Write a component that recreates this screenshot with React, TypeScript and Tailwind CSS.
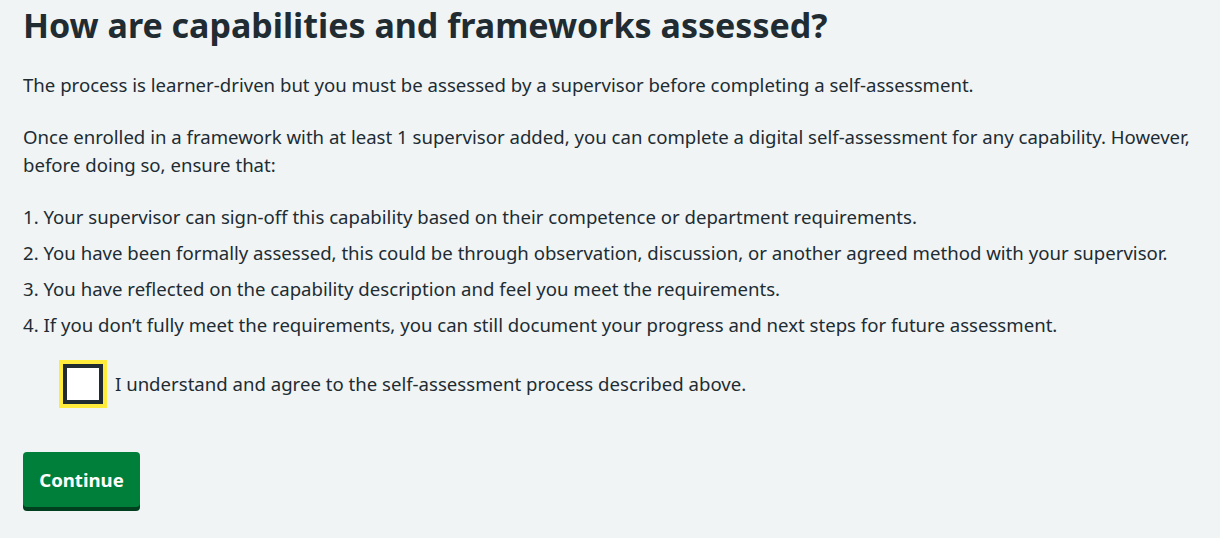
import React, { useState } from "react";

const items = [
  "Your supervisor can sign-off this capability based on their competence or department requirements.",
  "You have been formally assessed, this could be through observation, discussion, or another agreed method with your supervisor.",
  "You have reflected on the capability description and feel you meet the requirements.",
  "If you don’t fully meet the requirements, you can still document your progress and next steps for future assessment.",
];

export default function App() {
  const [agreed, setAgreed] = useState(false);

  return (
    <div
      className="min-h-[538px] bg-[#f0f4f5] text-[#212b32] pl-[23px] pr-[2px] pt-[4px]"
      style={{ fontFamily: '"Noto Sans", Arial, sans-serif' }}
    >
      <h1 className="text-[34px] leading-[42px] font-bold mb-[25px]">
        How are capabilities and frameworks assessed?
      </h1>
      <p className="text-[18.6px] leading-[28px] mb-6">
        The process is learner-driven but you must be assessed by a supervisor before completing a self-assessment.
      </p>
      <p className="text-[18.6px] leading-[28px] mb-6">
        Once enrolled in a framework with at least 1 supervisor added, you can complete a digital self-assessment for any capability. However,
        before doing so, ensure that:
      </p>
      <ol className="text-[18.6px] leading-[28px]">
        {items.map((item, i) => (
          <li key={i} className="mb-2">
            {i + 1}. {item}
          </li>
        ))}
      </ol>
      <label className="flex items-center gap-3 ml-[40px] mt-[25px] cursor-pointer w-fit">
        <span className="w-[40px] h-[40px] border-4 border-[#212b32] bg-white outline-4 outline-[#ffeb3b] flex items-center justify-center shrink-0">
          <input
            type="checkbox"
            checked={agreed}
            onChange={(e) => setAgreed(e.target.checked)}
            className="sr-only"
          />
          {agreed && (
            <svg width="24" height="24" viewBox="0 0 24 24" fill="none" stroke="#212b32" strokeWidth="4">
              <path d="M4 12l5 5L20 6" />
            </svg>
          )}
        </span>
        <span className="text-[18.6px] leading-[28px]">
          I understand and agree to the self-assessment process described above.
        </span>
      </label>
      <button
        type="submit"
        className="mt-[48px] h-[55px] w-[117px] bg-[#007f3b] text-white text-[18.6px] font-bold rounded-[4px] shadow-[0_4px_0_#00401e]"
      >
        Continue
      </button>
    </div>
  );
}
